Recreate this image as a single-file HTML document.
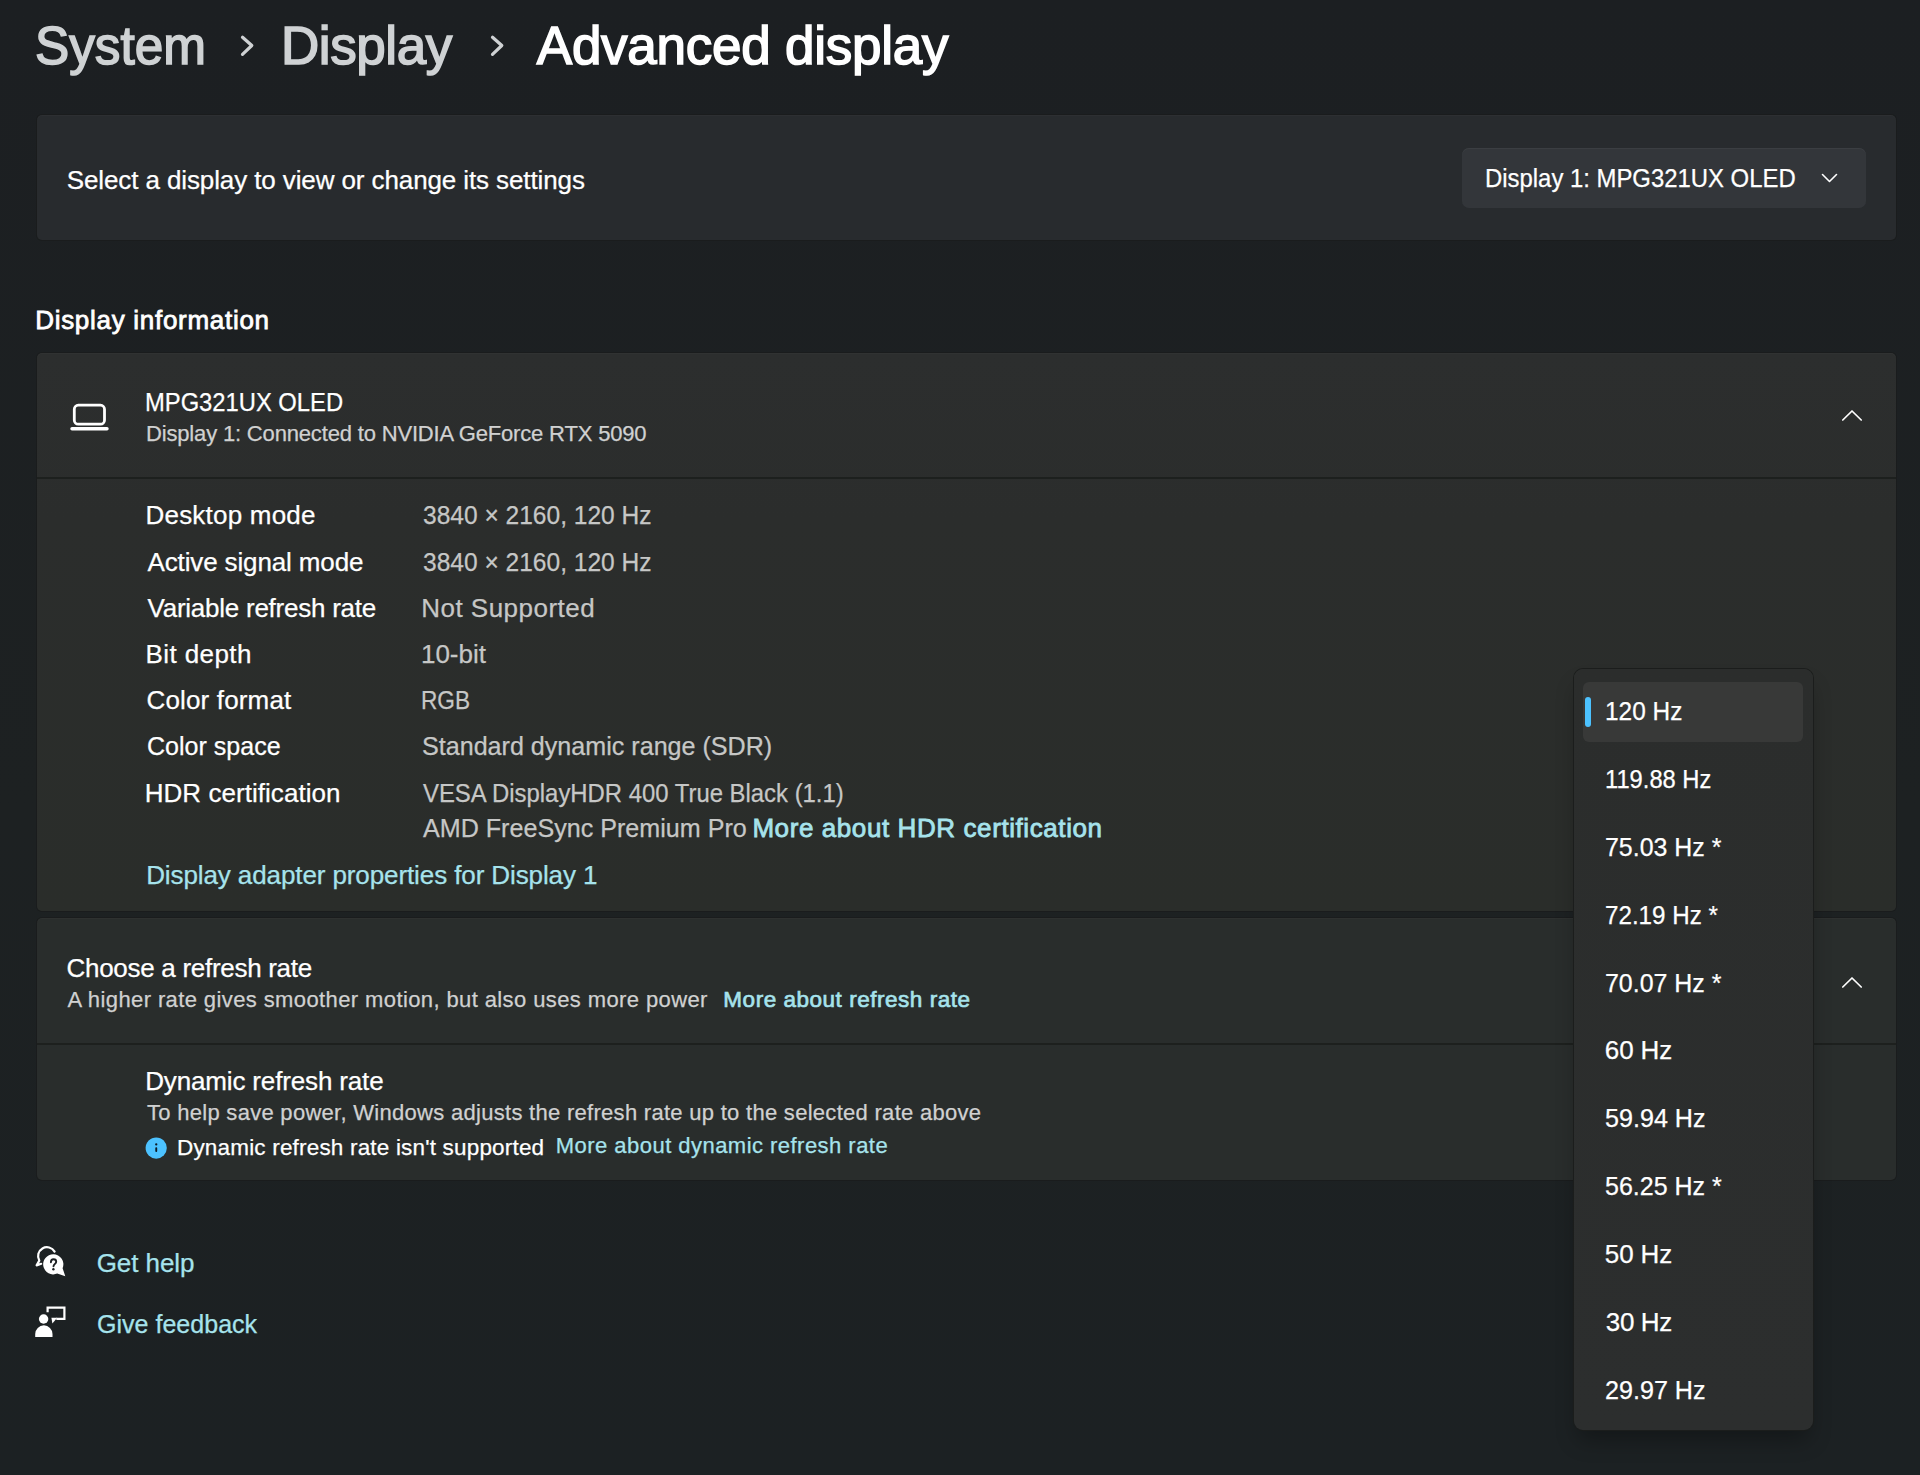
<!DOCTYPE html>
<html><head><meta charset="utf-8"><title>Advanced display</title>
<style>
html,body{margin:0;padding:0;}
body{width:1920px;height:1475px;overflow:hidden;position:relative;background:linear-gradient(180deg,#1c1f22 0%,#1d2122 55%,#1c2123 100%);font-family:"Liberation Sans",sans-serif;}
.t{position:absolute;white-space:nowrap;font-family:"Liberation Sans",sans-serif;}
.card{position:absolute;left:37px;width:1859px;border-radius:5px;box-shadow:0 0 0 1px #1a1c1d,inset 0 1px 0 rgba(255,255,255,0.025);}
.sep{position:absolute;left:37px;width:1859px;height:2px;background:#1d201e;}
svg{position:absolute;overflow:visible;}
</style></head><body>
<div class="card" style="top:115px;height:125px;background:#282b2e;"></div>
<div style="position:absolute;left:1462px;top:148px;width:404px;height:60px;border-radius:7px;background:#33363a;box-shadow:inset 0 1px 0 #3b3e42;"></div>
<div class="card" style="top:353px;height:558px;background:linear-gradient(180deg,#2c2e2e 0%,#2b2d2c 30%,#2a2d2a 100%);"></div>
<div class="sep" style="top:477px;"></div>
<div class="card" style="top:918px;height:262px;background:#292d2c;"></div>
<div class="sep" style="top:1043px;"></div>

<!-- breadcrumb chevrons -->
<svg style="left:0;top:0" width="1" height="1"><path d="M242.5 37.2 L251.8 45.5 L242.5 54.3" fill="none" stroke="#cfd2d4" stroke-width="3.2" stroke-linecap="round" stroke-linejoin="round"/>
<path d="M492.5 37.2 L501.8 45.5 L492.5 54.3" fill="none" stroke="#cfd2d4" stroke-width="3.2" stroke-linecap="round" stroke-linejoin="round"/>
<path d="M1822.5 174.5 L1829.5 181.5 L1836.5 174.5" fill="none" stroke="#ffffff" stroke-width="1.6" stroke-linecap="round" stroke-linejoin="round"/>
<path d="M1842.8 420 L1852 411 L1861.2 420" fill="none" stroke="#ffffff" stroke-width="1.7" stroke-linecap="round" stroke-linejoin="round"/>
<path d="M1842.8 987 L1852 978 L1861.2 987" fill="none" stroke="#ffffff" stroke-width="1.7" stroke-linecap="round" stroke-linejoin="round"/>
<!-- laptop -->
<rect x="74.3" y="405.2" width="30.2" height="19" rx="4" fill="none" stroke="#fff" stroke-width="2.8"/>
<line x1="72" y1="428.7" x2="107" y2="428.7" stroke="#fff" stroke-width="3.4" stroke-linecap="round"/>
<!-- info icon -->
<circle cx="156.2" cy="1148.1" r="10.6" fill="#4cc2ff"/>
<rect x="155.3" y="1147.2" width="1.9" height="4.7" rx="0.9" fill="#0d1a24"/>
<circle cx="156.25" cy="1144.4" r="1.15" fill="#0d1a24"/>
<!-- get help icon -->
<path d="M54.6 1251.6 A 8.8 8.8 0 0 0 39.3 1260.6 L 36.6 1265.4 L 41.2 1263.8" fill="none" stroke="#fff" stroke-width="2.2" stroke-linecap="round" stroke-linejoin="round"/>
<path d="M53.3 1254.2 A 10.1 10.1 0 1 0 57.2 1273.6 L 65.3 1276.2 L 62.6 1268.2 A 10.1 10.1 0 0 0 53.3 1254.2 Z" fill="#fff"/>
<path d="M50.9 1262.2 C 50.9 1260.2 52.1 1259.2 53.6 1259.2 C 55.2 1259.2 56.2 1260.3 56.2 1261.7 C 56.2 1263.7 53.6 1264 53.5 1266.3" fill="none" stroke="#1d2022" stroke-width="1.9" stroke-linecap="round"/>
<circle cx="53.4" cy="1269.2" r="1.2" fill="#1d2022"/>
<!-- feedback icon -->
<circle cx="43.6" cy="1319" r="4.7" fill="#fff"/>
<path d="M35.2 1337 L35.2 1334 A 8.65 8.65 0 0 1 52.5 1334 L52.5 1337 Z" fill="#fff"/>
<path d="M47.6 1312.3 L47.6 1307.6 L64.4 1307.6 L64.4 1318.9 L56.3 1318.9" fill="none" stroke="#fff" stroke-width="2.2" stroke-linejoin="miter" stroke-linecap="butt"/>
<path d="M51.4 1317.8 L57.2 1317.8 L52.4 1323.6 Z" fill="#fff"/>
</svg>

<!-- popup -->
<div style="position:absolute;left:1574px;top:669px;width:239px;height:761px;border-radius:9px;background:linear-gradient(180deg,#2b2d2c 0%,#2c2e2e 100%);box-shadow:0 0 0 1px #1b1d1c,0 14px 22px -4px rgba(0,0,0,0.30);"></div>
<div style="position:absolute;left:1583px;top:682px;width:220px;height:60px;border-radius:6px;background:#383938;"></div>
<div style="position:absolute;left:1585px;top:697px;width:6px;height:30px;border-radius:3px;background:#4cc2ff;"></div>

<span id="t1" class="t" style="left:35.03px;top:19.15px;font-size:53px;line-height:53px;color:#cfd2d4;letter-spacing:0.000px;transform:scaleX(0.9674);transform-origin:0 0;-webkit-text-stroke:1.59px #cfd2d4;">System</span>
<span id="t2" class="t" style="left:281.00px;top:19.15px;font-size:53px;line-height:53px;color:#cfd2d4;letter-spacing:-0.428px;-webkit-text-stroke:1.59px #cfd2d4;">Display</span>
<span id="t3" class="t" style="left:536.79px;top:19.15px;font-size:53px;line-height:53px;color:#ffffff;letter-spacing:-0.255px;-webkit-text-stroke:1.59px #ffffff;">Advanced display</span>
<span id="c1" class="t" style="left:66.70px;top:166.60px;font-size:26px;line-height:26px;color:#ffffff;letter-spacing:-0.106px;-webkit-text-stroke:0.25px #ffffff;">Select a display to view or change its settings</span>
<span id="dd" class="t" style="left:1484.86px;top:164.90px;font-size:26px;line-height:26px;color:#ffffff;letter-spacing:0.000px;transform:scaleX(0.9187);transform-origin:0 0;-webkit-text-stroke:0.25px #ffffff;">Display 1: MPG321UX OLED</span>
<span id="h1" class="t" style="left:35.19px;top:307.30px;font-size:26px;line-height:26px;color:#ffffff;letter-spacing:0.711px;-webkit-text-stroke:0.78px #ffffff;">Display information</span>
<span id="m1" class="t" style="left:145.17px;top:389.15px;font-size:26px;line-height:26px;color:#ffffff;letter-spacing:0.000px;transform:scaleX(0.9137);transform-origin:0 0;-webkit-text-stroke:0.25px #ffffff;">MPG321UX OLED</span>
<span id="m2" class="t" style="left:146.00px;top:423.00px;font-size:22px;line-height:22px;color:#d0d1d1;letter-spacing:-0.167px;-webkit-text-stroke:0.25px #d0d1d1;">Display 1: Connected to NVIDIA GeForce RTX 5090</span>
<span id="l1" class="t" style="left:145.50px;top:502.10px;font-size:26px;line-height:26px;color:#ffffff;letter-spacing:0.211px;-webkit-text-stroke:0.25px #ffffff;">Desktop mode</span>
<span id="l2" class="t" style="left:147.50px;top:548.70px;font-size:26px;line-height:26px;color:#ffffff;letter-spacing:-0.133px;-webkit-text-stroke:0.25px #ffffff;">Active signal mode</span>
<span id="l3" class="t" style="left:147.50px;top:594.60px;font-size:26px;line-height:26px;color:#ffffff;letter-spacing:-0.244px;-webkit-text-stroke:0.25px #ffffff;">Variable refresh rate</span>
<span id="l4" class="t" style="left:145.50px;top:640.90px;font-size:26px;line-height:26px;color:#ffffff;letter-spacing:0.416px;-webkit-text-stroke:0.25px #ffffff;">Bit depth</span>
<span id="l5" class="t" style="left:146.50px;top:686.90px;font-size:26px;line-height:26px;color:#ffffff;letter-spacing:0.153px;-webkit-text-stroke:0.25px #ffffff;">Color format</span>
<span id="l6" class="t" style="left:146.54px;top:733.20px;font-size:26px;line-height:26px;color:#ffffff;letter-spacing:0.000px;transform:scaleX(0.9630);transform-origin:0 0;-webkit-text-stroke:0.25px #ffffff;">Color space</span>
<span id="l7" class="t" style="left:144.70px;top:779.90px;font-size:26px;line-height:26px;color:#ffffff;letter-spacing:0.044px;-webkit-text-stroke:0.25px #ffffff;">HDR certification</span>
<span id="v1" class="t" style="left:423.20px;top:502.10px;font-size:26px;line-height:26px;color:#c6c7c6;letter-spacing:0.000px;transform:scaleX(0.9439);transform-origin:0 0;-webkit-text-stroke:0.25px #c6c7c6;">3840 × 2160, 120 Hz</span>
<span id="v2" class="t" style="left:423.20px;top:548.70px;font-size:26px;line-height:26px;color:#c6c7c6;letter-spacing:0.000px;transform:scaleX(0.9439);transform-origin:0 0;-webkit-text-stroke:0.25px #c6c7c6;">3840 × 2160, 120 Hz</span>
<span id="v3" class="t" style="left:421.20px;top:594.60px;font-size:26px;line-height:26px;color:#c6c7c6;letter-spacing:0.491px;-webkit-text-stroke:0.25px #c6c7c6;">Not Supported</span>
<span id="v4" class="t" style="left:421.00px;top:640.90px;font-size:26px;line-height:26px;color:#c6c7c6;letter-spacing:-0.023px;-webkit-text-stroke:0.25px #c6c7c6;">10-bit</span>
<span id="v5" class="t" style="left:421.46px;top:686.90px;font-size:26px;line-height:26px;color:#c6c7c6;letter-spacing:0.000px;transform:scaleX(0.8717);transform-origin:0 0;-webkit-text-stroke:0.25px #c6c7c6;">RGB</span>
<span id="v6" class="t" style="left:422.23px;top:733.20px;font-size:26px;line-height:26px;color:#c6c7c6;letter-spacing:0.000px;transform:scaleX(0.9655);transform-origin:0 0;-webkit-text-stroke:0.25px #c6c7c6;">Standard dynamic range (SDR)</span>
<span id="v7" class="t" style="left:422.70px;top:779.90px;font-size:26px;line-height:26px;color:#c6c7c6;letter-spacing:0.000px;transform:scaleX(0.9185);transform-origin:0 0;-webkit-text-stroke:0.25px #c6c7c6;">VESA DisplayHDR 400 True Black (1.1)</span>
<span id="v8" class="t" style="left:422.70px;top:814.60px;font-size:26px;line-height:26px;color:#c6c7c6;letter-spacing:0.000px;transform:scaleX(0.9659);transform-origin:0 0;-webkit-text-stroke:0.25px #c6c7c6;">AMD FreeSync Premium Pro</span>
<span id="k1" class="t" style="left:752.39px;top:814.60px;font-size:26px;line-height:26px;color:#a6e3ec;letter-spacing:0.588px;-webkit-text-stroke:0.78px #a6e3ec;">More about HDR certification</span>
<span id="k2" class="t" style="left:146.20px;top:862.20px;font-size:26px;line-height:26px;color:#a6e3ec;letter-spacing:-0.101px;-webkit-text-stroke:0.25px #a6e3ec;">Display adapter properties for Display 1</span>
<span id="r1" class="t" style="left:66.50px;top:955.40px;font-size:26px;line-height:26px;color:#ffffff;letter-spacing:-0.290px;-webkit-text-stroke:0.25px #ffffff;">Choose a refresh rate</span>
<span id="r2" class="t" style="left:67.50px;top:989.30px;font-size:22px;line-height:22px;color:#d0d1d1;letter-spacing:0.393px;-webkit-text-stroke:0.25px #d0d1d1;">A higher rate gives smoother motion, but also uses more power</span>
<span id="k3" class="t" style="left:723.34px;top:989.38px;font-size:22.5px;line-height:22.5px;color:#a6e3ec;letter-spacing:0.524px;-webkit-text-stroke:0.67px #a6e3ec;">More about refresh rate</span>
<span id="r3" class="t" style="left:145.20px;top:1067.70px;font-size:26px;line-height:26px;color:#ffffff;letter-spacing:-0.149px;-webkit-text-stroke:0.25px #ffffff;">Dynamic refresh rate</span>
<span id="r4" class="t" style="left:147.00px;top:1102.00px;font-size:22px;line-height:22px;color:#d0d1d1;letter-spacing:0.287px;-webkit-text-stroke:0.25px #d0d1d1;">To help save power, Windows adjusts the refresh rate up to the selected rate above</span>
<span id="r5" class="t" style="left:177.00px;top:1137.38px;font-size:22.5px;line-height:22.5px;color:#ffffff;letter-spacing:0.183px;-webkit-text-stroke:0.25px #ffffff;">Dynamic refresh rate isn&#39;t supported</span>
<span id="k4" class="t" style="left:555.80px;top:1134.80px;font-size:22px;line-height:22px;color:#a6e3ec;letter-spacing:0.464px;-webkit-text-stroke:0.25px #a6e3ec;">More about dynamic refresh rate</span>
<span id="g1" class="t" style="left:96.70px;top:1249.80px;font-size:26px;line-height:26px;color:#a6e3ec;letter-spacing:-0.075px;-webkit-text-stroke:0.25px #a6e3ec;">Get help</span>
<span id="g2" class="t" style="left:96.74px;top:1310.60px;font-size:26px;line-height:26px;color:#a6e3ec;letter-spacing:0.000px;transform:scaleX(0.9633);transform-origin:0 0;-webkit-text-stroke:0.25px #a6e3ec;">Give feedback</span>
<span id="p0" class="t" style="left:1604.86px;top:697.90px;font-size:26px;line-height:26px;color:#ffffff;letter-spacing:0.000px;transform:scaleX(0.9387);transform-origin:0 0;-webkit-text-stroke:0.25px #ffffff;">120 Hz</span>
<span id="p1" class="t" style="left:1604.89px;top:765.80px;font-size:26px;line-height:26px;color:#ffffff;letter-spacing:0.000px;transform:scaleX(0.9119);transform-origin:0 0;-webkit-text-stroke:0.25px #ffffff;">119.88 Hz</span>
<span id="p2" class="t" style="left:1604.84px;top:833.70px;font-size:26px;line-height:26px;color:#ffffff;letter-spacing:0.000px;transform:scaleX(0.9594);transform-origin:0 0;-webkit-text-stroke:0.25px #ffffff;">75.03 Hz *</span>
<span id="p3" class="t" style="left:1604.87px;top:901.60px;font-size:26px;line-height:26px;color:#ffffff;letter-spacing:0.000px;transform:scaleX(0.9294);transform-origin:0 0;-webkit-text-stroke:0.25px #ffffff;">72.19 Hz *</span>
<span id="p4" class="t" style="left:1604.84px;top:969.50px;font-size:26px;line-height:26px;color:#ffffff;letter-spacing:0.000px;transform:scaleX(0.9594);transform-origin:0 0;-webkit-text-stroke:0.25px #ffffff;">70.07 Hz *</span>
<span id="p5" class="t" style="left:1604.80px;top:1037.40px;font-size:26px;line-height:26px;color:#ffffff;letter-spacing:-0.130px;-webkit-text-stroke:0.25px #ffffff;">60 Hz</span>
<span id="p6" class="t" style="left:1604.83px;top:1105.30px;font-size:26px;line-height:26px;color:#ffffff;letter-spacing:0.000px;transform:scaleX(0.9661);transform-origin:0 0;-webkit-text-stroke:0.25px #ffffff;">59.94 Hz</span>
<span id="p7" class="t" style="left:1604.84px;top:1173.20px;font-size:26px;line-height:26px;color:#ffffff;letter-spacing:0.000px;transform:scaleX(0.9619);transform-origin:0 0;-webkit-text-stroke:0.25px #ffffff;">56.25 Hz *</span>
<span id="p8" class="t" style="left:1604.80px;top:1241.10px;font-size:26px;line-height:26px;color:#ffffff;letter-spacing:-0.130px;-webkit-text-stroke:0.25px #ffffff;">50 Hz</span>
<span id="p9" class="t" style="left:1605.80px;top:1309.00px;font-size:26px;line-height:26px;color:#ffffff;letter-spacing:-0.380px;-webkit-text-stroke:0.25px #ffffff;">30 Hz</span>
<span id="p10" class="t" style="left:1604.83px;top:1376.90px;font-size:26px;line-height:26px;color:#ffffff;letter-spacing:0.000px;transform:scaleX(0.9661);transform-origin:0 0;-webkit-text-stroke:0.25px #ffffff;">29.97 Hz</span>
</body></html>
